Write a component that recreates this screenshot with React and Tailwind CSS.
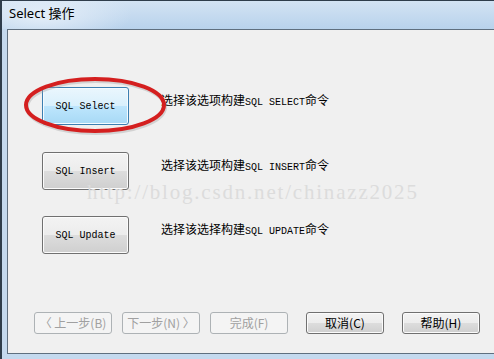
const cjk = "font-['Noto_Sans_CJK_SC',sans-serif]";
const mono = "font-['Liberation_Mono','Noto_Sans_CJK_SC',monospace]";

const normalBtn =
  "border border-[#707070] rounded-[3px] bg-[linear-gradient(to_bottom,#f3f3f3_0%,#ececec_50%,#dddddd_50%,#cfcfcf_100%)] shadow-[inset_0_0_0_1px_#fbfbfb]";
const hotBtn =
  "border border-[#3c7fb1] rounded-[3px] bg-[linear-gradient(to_bottom,#eaf6fd_0%,#d9f0fc_50%,#bee6fd_50%,#a7d9f5_100%)] shadow-[inset_0_0_0_1px_#f4fbff]";

function OptionRow({ label, hot, text, className }) {
  return (
    <div className={`flex items-center ${className}`}>
      <div
        className={`w-[87px] h-[38px] flex items-center justify-center ${hot ? hotBtn : normalBtn}`}
      >
        <span className={`${mono} text-[10px] text-black`}>{label}</span>
      </div>
      <div className={`ml-[32px] text-[12px] leading-none text-black ${cjk} -mt-[10px]`}>
        {text}
      </div>
    </div>
  );
}

function Label({ pre, latin, post }) {
  return (
    <>
      {pre}
      <span className={`${mono} text-[10px]`}>{latin}</span>
      {post}
    </>
  );
}

function WizardButton({ children, disabled, className = "" }) {
  return (
    <div
      className={`w-[78px] h-[22px] flex items-center justify-center text-[12px] ${cjk} ${
        disabled
          ? "border border-[#adb2b5] rounded-[3px] bg-[#f4f4f4] text-[#a0a0a0]"
          : `${normalBtn} text-black`
      } ${className}`}
    >
      {children}
    </div>
  );
}

export default function App() {
  return (
    <div className="relative w-[494px] h-[359px] overflow-hidden bg-[#c4d9ee] border-l-2 border-t border-[#2f3d4b] flex flex-col">
      <div className="h-[28px] shrink-0 flex items-center pl-[7px] bg-[radial-gradient(ellipse_90px_30px_at_40px_14px,#e4eef8,transparent),linear-gradient(to_bottom,#d3e3f3,#b8d2ec)]">
        <span className="text-[13px] text-black font-['Noto_Sans','Noto_Sans_CJK_SC',sans-serif] -mt-[2px]">
          Select 操作
        </span>
      </div>

      <div className="ml-[5px] w-[500px] h-[325px] border border-[#5f6f7f] bg-[#f0f0f0] flex flex-col pl-[34px] pt-[57px]">
        <OptionRow
          label="SQL Select"
          hot
          text={<Label pre="选择该选项构建" latin="SQL SELECT" post="命令" />}
        />
        <OptionRow
          className="mt-[27px]"
          label="SQL Insert"
          text={<Label pre="选择该选项构建" latin="SQL INSERT" post="命令" />}
        />
        <OptionRow
          className="mt-[26px]"
          label="SQL Update"
          text={<Label pre="选择该选择构建" latin="SQL UPDATE" post="命令" />}
        />

        <div className="flex items-center mt-[58px] -ml-[8px]">
          <WizardButton disabled>〈 上一步(B)</WizardButton>
          <WizardButton disabled className="ml-[10px]">下一步(N) 〉</WizardButton>
          <WizardButton disabled className="ml-[10px]">完成(F)</WizardButton>
          <WizardButton className="ml-[18px]">取消(C)</WizardButton>
          <WizardButton className="ml-[18px]">帮助(H)</WizardButton>
        </div>
      </div>

      {/* highlight ring drawn over the dialog */}
      <svg
        className="absolute left-[20px] top-[73px] pointer-events-none"
        width="148"
        height="64"
        viewBox="0 0 148 64"
      >
        <ellipse cx="73" cy="31" rx="69" ry="26" fill="none" stroke="#9a9a9a" strokeWidth="4" opacity="0.35" transform="translate(1 2)" />
        <ellipse cx="73" cy="31" rx="69" ry="26" fill="none" stroke="#d41f1f" strokeWidth="4" />
      </svg>

      {/* watermark */}
      <div className="absolute left-[85px] top-[176px] text-[21px] tracking-[1.8px] text-[#dcdcdc] font-['Liberation_Serif',serif] pointer-events-none whitespace-nowrap">
        http://blog.csdn.net/chinazz2025
      </div>
    </div>
  );
}
